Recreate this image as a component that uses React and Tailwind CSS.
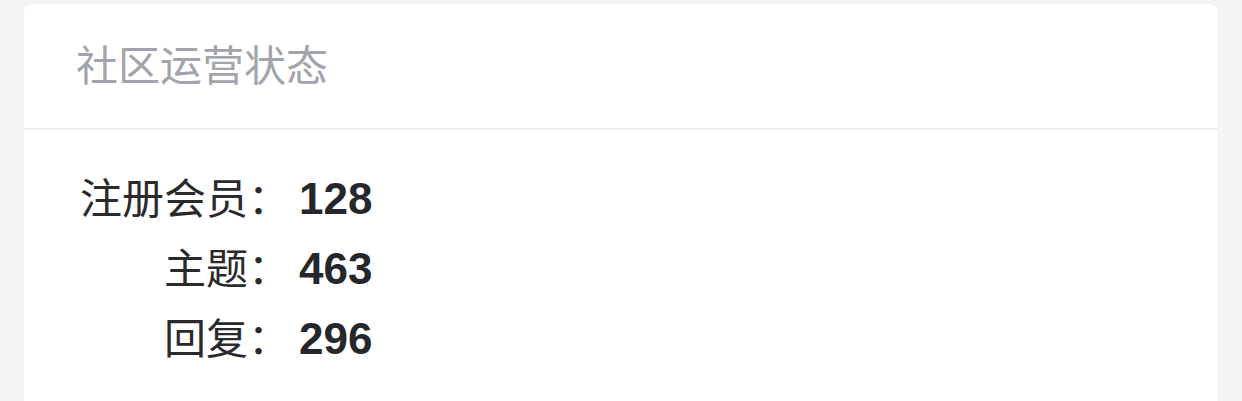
import React from 'react';

const stats = [
    { label: '注册会员', value: 128 },
    { label: '主题', value: 463 },
    { label: '回复', value: 296 },
];

const App = () => {
    return (
        <div
            className="min-h-screen bg-[#f4f4f7] px-[24px] pt-[4px] flex flex-col"
            style={{ fontFamily: '"Liberation Sans", "Noto Sans CJK SC", sans-serif' }}
        >
            <div className="flex-1 bg-white rounded-t-[8px] shadow-[0_0_3px_rgba(0,0,0,0.04)] flex flex-col">
                <div className="h-[126px] flex items-center px-[52px] border-b-2 border-[#f1f1f3]">
                    <h2 className="text-[42px] leading-none text-[#a1a4aa] font-normal pt-[2px]">社区运营状态</h2>
                </div>
                <div className="pl-[56px] pt-[34px]">
                    <div className="grid grid-cols-[auto_auto] justify-start items-baseline gap-x-[9px]">
                        {stats.map((s) => (
                            <React.Fragment key={s.label}>
                                <div className="text-right text-[42px] leading-[69px] text-[#2a2a2c]">
                                    {s.label}：
                                </div>
                                <div className="text-[44px] leading-[69px] font-bold text-[#25272b]">
                                    {s.value}
                                </div>
                            </React.Fragment>
                        ))}
                    </div>
                </div>
            </div>
        </div>
    );
};

export default App;
